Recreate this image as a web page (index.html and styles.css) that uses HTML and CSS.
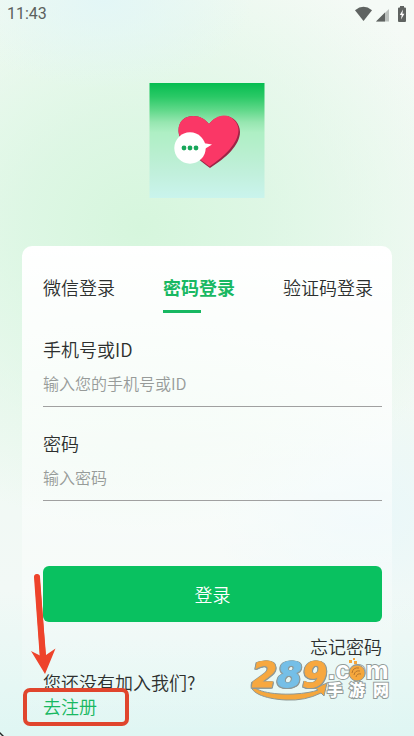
FILE: index.html
```html
<!DOCTYPE html>
<html lang="zh-CN">
<head>
<meta charset="utf-8">
<meta name="viewport" content="width=device-width, initial-scale=1">
<title>密码登录</title>
<link rel="stylesheet" href="styles.css">
</head>
<body>
<div class="page">
  <header class="status">
    <span>11:43</span>
    <svg class="status-icons" width="54" height="18" viewBox="0 0 54 18" aria-hidden="true">
      <path d="M1 5.2Q9.500-1.500 18 5.200L9.500 16Z" fill="#5f6361"/>
      <path d="M35 4V16.500H22Z" fill="#bcc1be"/>
      <path d="M31 7.500V16.500H22Z" fill="#5f6361"/>
      <path d="M46 2.500V1H50V2.500H51Q52 2.500 52 3.500V16Q52 17 51 17H45Q44 17 44 16V3.500Q44 2.500 45 2.500Z" fill="#5f6361"/>
      <path d="M49 4.500L45.800 10H47.700L47 14.500L50.400 8.700H48.400Z" fill="#fff"/>
    </svg>
  </header>

  <svg class="logo" viewBox="0 0 116 115" role="img" aria-label="聊天爱心">
    <defs>
      <linearGradient id="sky" x1="0" y1="0" x2="0" y2="1">
        <stop offset="0" stop-color="#06bd50"/>
        <stop offset=".12" stop-color="#2ac966"/>
        <stop offset=".24" stop-color="#62d98b"/>
        <stop offset=".34" stop-color="#96e6b0"/>
        <stop offset=".43" stop-color="#aeefc4"/>
        <stop offset=".62" stop-color="#b9efd0"/>
        <stop offset=".8" stop-color="#c2f0dd"/>
        <stop offset="1" stop-color="#caf4ed"/>
      </linearGradient>
    </defs>
    <path d="M0.500 0H115.500V115H0.500Z" fill="url(#sky)"/>
    <path d="M61 85C45 73 29.500 60 29.500 48C29.500 38 36 33 44 33C51 33 56 36 60 41C64 36 69 33 76 33C85 33 91 41 91 49C91 62 77 75 61 85Z" fill="#9d2446"/>
    <path d="M60.500 83.500C45 72 29.500 59 29.500 47C29.500 38 36 33 44.500 33C51 33 56 36 60 41C64 36 69 32.500 75 32.500C83 32.500 89.500 40 89.500 47C89.500 60 76 73 60.500 83.500Z" fill="#fa3766"/>
    <path d="M54 60L63 61.500L54 67Z" fill="#fff"/>
    <circle cx="41" cy="65" r="15.700" fill="#fff"/>
    <g fill="#18a75b"><circle cx="35" cy="65" r="2.400"/><circle cx="41" cy="65" r="2.400"/><circle cx="47" cy="65" r="2.400"/></g>
  </svg>

  <main class="card">
    <nav class="tabs">
      <a href="#wechat">微信登录</a>
      <a class="active" href="#password" aria-current="page">密码登录</a>
      <a href="#code">验证码登录</a>
    </nav>
    <form class="form">
      <div class="field">
        <label for="account">手机号或ID</label>
        <input id="account" type="text" placeholder="输入您的手机号或ID">
      </div>
      <div class="field">
        <label for="pass">密码</label>
        <input id="pass" type="password" placeholder="输入密码">
      </div>
      <button class="submit" type="button">登录</button>
    </form>
    <a class="forgot" href="#forgot">忘记密码</a>
    <div class="join">
      <span>您还没有加入我们?</span>
      <a href="#register">去注册</a>
      <svg class="callout" width="110" height="160" viewBox="0 0 110 160" aria-hidden="true">
        <path d="M12.500 8Q15 5 17.500 8L24 87L33.500 80.500L23 106L9 83L18 87.500Z" fill="#ee432b"/>
        <path d="M15 9L21 92" stroke="#ee432b" stroke-width="6" stroke-linecap="round"/>
        <rect x="3" y="122" width="102" height="34" rx="5" fill="none" stroke="#e0452d" stroke-width="4"/>
      </svg>
    </div>
    <svg class="watermark" width="144" height="44" viewBox="0 0 144 44" role="img" aria-label="289.com手游网">
      <path d="M4 24C3 33 24 37 46 36Q62 35 70 32L67 30L79 25L76 38L73 35Q57 43 38 42C16 41-1 34 4 24Z" fill="#f5a73d" stroke="#8d9896"/>
      <text class="wm-num" x="4" y="29"><tspan class="orange">2</tspan><tspan class="blue">8</tspan><tspan class="orange">9</tspan></text>
      <text class="wm-com" x="80" y="21">.com</text>
      <g>
        <circle cx="109" cy="15" r="8" fill="#f5a73d" stroke="#929b99"/>
        <path d="M104 15Q105 9 111 10M106 17Q107 12 112 13M108 19Q109 15 113 16" fill="none" stroke="#b8772d"/>
        <path d="M101 2H104V5H101ZM105 0H107V2H105ZM106 3H109V6H106Z" fill="#f5a73d"/>
      </g>
      <g class="wm-cn"><text x="79" y="38">手</text><text x="101" y="38">游</text><text x="125" y="38">网</text></g>
    </svg>
  </main>
  <svg class="corner" width="4" height="4" viewBox="0 0 4 4" aria-hidden="true"><path d="M0 0L4 4H2L0 2Z" fill="#222"/></svg>
</div>
</body>
</html>
```
FILE: styles.css
```css
* { box-sizing: border-box; }

body {
  margin: 0;
  font-family: "Noto Sans CJK SC", sans-serif;
  font-size: 18px;
  font-weight: 350;
  line-height: 24px;
  color: #2d302f;
}

a { color: inherit; text-decoration: none; }

.page {
  position: relative;
  display: flex;
  flex-direction: column;
  min-height: 100vh;
  overflow: hidden;
  background:
    radial-gradient(ellipse 150px 90px at 25% 0, rgba(226, 246, 247, .9), rgba(226, 246, 240, 0)),
    radial-gradient(ellipse 340px 300px at 34% 31%, #d6f6dd 0, rgba(216, 246, 224, .8) 35%, rgba(228, 247, 234, 0)),
    radial-gradient(ellipse 150px 120px at 88% 70%, #e9f7f9, rgba(238, 248, 248, 0)),
    linear-gradient(to bottom, #f5faf6 0, #f1f9f4 60%, #f2f9f6 80%, #dff6f3 100%);
}

.status {
  display: flex;
  align-items: center;
  justify-content: space-between;
  height: 28px;
  padding: 0 6px 0 7px;
  font-family: Roboto, sans-serif;
  font-size: 16px;
  font-weight: 400;
  color: #5b605d;
}

.logo {
  width: 116px;
  height: 115px;
  margin: 55px auto 48px;
}

.card {
  position: relative;
  flex: 1;
  display: flex;
  flex-direction: column;
  margin: 0 22px;
  padding: 29px 10px 16px 21px;
  border-radius: 10px 10px 0 0;
  background: linear-gradient(to bottom, #fff 0, rgba(255, 255, 255, .85) 20%, rgba(255, 255, 255, .5) 50%, rgba(255, 255, 255, .25) 75%, rgba(255, 255, 255, 0) 100%);
}

.tabs {
  display: grid;
  grid-template-columns: 1fr 1fr 99px;
  margin-bottom: 24px;
}

.tabs a { padding-bottom: 14px; }

.tabs .active {
  font-weight: 700;
  color: #18b862;
  background: linear-gradient(#18b862, #18b862) left bottom / 38px 3px no-repeat;
}

.form {
  display: flex;
  flex-direction: column;
  gap: 24px;
}

.field {
  display: flex;
  flex-direction: column;
}

.field input {
  width: 100%;
  height: 46px;
  padding: 0 0 2px;
  border: 0;
  border-bottom: 1px solid #a0a0a0;
  border-radius: 0;
  background: none;
  font: 350 16px/24px "Noto Sans CJK SC", sans-serif;
  color: #2d302f;
}

.field input::placeholder { color: #979b99; opacity: 1; }

.submit {
  height: 56px;
  margin-top: 41px;
  border: 0;
  border-radius: 6px;
  background: #09c160;
  color: #fff;
  font: 350 18px/24px "Noto Sans CJK SC", sans-serif;
}

.forgot {
  align-self: flex-end;
  margin: 12px 0;
}

.join {
  position: relative;
  display: flex;
  flex-direction: column;
  align-items: flex-start;
}

.join a { color: #18b862; }

.callout {
  position: absolute;
  left: -21px;
  bottom: -10px;
}

.watermark {
  position: absolute;
  right: 0;
  bottom: 34px;
  overflow: visible;
}

.wm-num {
  font: italic 700 36px "DejaVu Sans", sans-serif;
  stroke-width: 1px;
  filter: drop-shadow(1px 0 0 #8d9896) drop-shadow(-1px 0 0 #8d9896) drop-shadow(0 1px 0 #8d9896);
}

.orange {
  fill: #f7a840;
  stroke: #f7a840;
}

.blue {
  fill: #75bfe7;
  stroke: #75bfe7;
}

.wm-com {
  font: 700 26px "Liberation Sans", sans-serif;
  fill: #fff;
  stroke: #929b99;
  stroke-width: 2px;
  paint-order: stroke;
}

.wm-cn {
  font: 900 16px "Noto Sans CJK SC", sans-serif;
  fill: #fff;
  stroke: #929b99;
  stroke-width: 2px;
  paint-order: stroke;
}

.corner {
  position: absolute;
  left: 0;
  bottom: 0;
}
```
